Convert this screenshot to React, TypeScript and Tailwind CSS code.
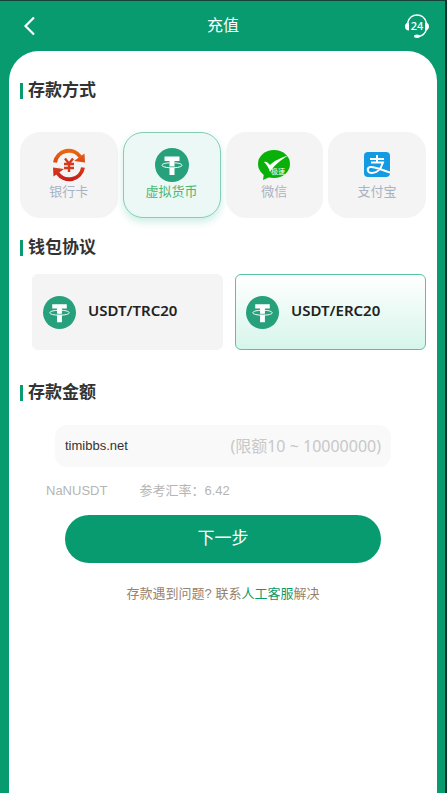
import { useState } from "react";

const TetherIcon = ({ className }: { className: string }) => (
  <svg viewBox="0 0 34 34" className={className} aria-hidden="true">
    <circle cx="17" cy="17" r="17" fill="#26a17b" />
    <path d="M9.500 8.500h15v4.500h-5v14h-5V13h-5z" fill="#fff" />
    <path d="M14.500 14.800C10 15 7 16 7 17.300c0 1.400 4.500 2.500 10 2.500s10-1.100 10-2.500c0-1.300-3-2.300-7.500-2.500" fill="none" stroke="#fff" strokeWidth="1" />
    <path d="M14.500 18.700c1.600.2 3.400.2 5 0" fill="none" stroke="#26a17b" strokeWidth="0.800" />
  </svg>
);

const BankIcon = () => (
  <svg viewBox="0 0 34 34" className="h-[34px] w-[34px]" aria-hidden="true">
    <defs>
      <linearGradient id="bank" gradientUnits="userSpaceOnUse" x1="0" y1="0" x2="0" y2="34">
        <stop offset="0" stopColor="#ee6c10" />
        <stop offset="1" stopColor="#c41a1c" />
      </linearGradient>
    </defs>
    <path d="M3 14.500A14 14 0 0 1 28.500 9M31 19.500A14 14 0 0 1 5.500 25" fill="none" stroke="url(#bank)" strokeWidth="4" />
    <path d="M32.500 5.500L33 14.500 22 13zM1.500 28.500L1 19.500 12 21z" fill="url(#bank)" />
    <path d="M13 10.500l4 5 4-5M17 15v9M12 16h10M12 20h10" fill="none" stroke="#d8391b" strokeWidth="2.400" />
  </svg>
);

const WechatIcon = () => (
  <svg viewBox="0 0 34 34" className="h-[34px] w-[34px]" aria-hidden="true">
    <ellipse cx="17" cy="16" rx="16" ry="14" fill="#09b007" />
    <path d="M7 25l-1 7 9-4z" fill="#09b007" />
    <path d="M7 14c3-1 4 1 6 3 4-4 10-7 19-10-8 5-14 9-19 17-1-4-3-7-6-10z" fill="#fff" />
    <text x="14" y="26" fontSize="7" fill="#fff" fontFamily="Noto Sans CJK SC, sans-serif">
      极速
    </text>
  </svg>
);

const AlipayIcon = () => (
  <svg viewBox="0 0 34 34" className="h-[34px] w-[34px]" aria-hidden="true">
    <rect x="4" y="4" width="26" height="25" rx="4" fill="#129be2" />
    <path
      d="M10 11h14M17 7v7M11 14.500h12c-2 6-6 10.500-11 10.500-5 0-5.500-5-2-6 5-1 11 3 20 5.500"
      fill="none"
      stroke="#fff"
      strokeWidth="2"
    />
  </svg>
);

const ServiceIcon = () => (
  <svg viewBox="0 0 24 24" className="h-6 w-6" aria-hidden="true">
    <path d="M2.500 9C4 3.500 8 1 12 1s8 2.500 9.500 8M21.500 15c-1 4-4 7-8.500 7.500" fill="none" stroke="#fff" strokeWidth="1.400" />
    <path d="M4 8.500v8C1.500 16.500 0 15 0 12.500s1.500-4 4-4zM20 8.500v8c2.500 0 4-1.500 4-4s-1.500-4-4-4z" fill="#fff" />
    <ellipse cx="12" cy="22.300" rx="3" ry="1.700" fill="#fff" />
    <text x="12" y="15.500" fontSize="11" fontWeight="600" textAnchor="middle" fill="#fff" fontFamily="Open Sans, sans-serif">
      24
    </text>
  </svg>
);

const methods = [
  { id: "bank", label: "银行卡", icon: <BankIcon /> },
  { id: "crypto", label: "虚拟货币", icon: <TetherIcon className="h-[34px] w-[34px]" /> },
  { id: "wechat", label: "微信", icon: <WechatIcon /> },
  { id: "alipay", label: "支付宝", icon: <AlipayIcon /> },
];

const protocols = ["USDT/TRC20", "USDT/ERC20"];

const SectionTitle = ({ children }: { children: string }) => (
  <h2 className="flex h-6 items-center gap-[5px] text-[17px] font-bold text-[#333]">
    <span className="h-4 w-[3px] bg-[#089b70]" />
    {children}
  </h2>
);

export default function App() {
  const [method, setMethod] = useState("crypto");
  const [protocol, setProtocol] = useState("USDT/ERC20");
  const [amount, setAmount] = useState("timibbs.net");

  return (
    <div className="flex min-h-screen flex-col border-t border-r-2 border-t-[#163f35] border-r-[#12362d] bg-[#089b70] pr-2 pl-[9px] font-['Liberation_Sans','Noto_Sans_CJK_SC',sans-serif]">
      <header className="flex h-[50px] items-center justify-between px-2 text-white">
        <button aria-label="返回" className="flex w-6 items-center justify-center">
          <svg viewBox="0 0 14 20" className="h-5 w-[14px]" aria-hidden="true">
            <path d="M12 1.500L3.500 10l8.500 8.500" fill="none" stroke="#fff" strokeWidth="2.200" />
          </svg>
        </button>
        <h1 className="text-base">充值</h1>
        <button aria-label="在线客服">
          <ServiceIcon />
        </button>
      </header>

      <main className="grow rounded-t-[30px] bg-white px-[11px] pt-7">
        <SectionTitle>存款方式</SectionTitle>
        <div className="mt-[29px] grid grid-cols-4 gap-[5px]">
          {methods.map((item) => (
            <button
              key={item.id}
              onClick={() => setMethod(item.id)}
              className={`flex h-[86px] flex-col items-center rounded-[20px] border pt-[15px] text-[13px] leading-5 ${
                method === item.id
                  ? "border-[#84cdb7] bg-[#ebf8f5] text-[#4cb670] shadow-[0_4px_8px_#cdeee4]"
                  : "border-[#f4f4f4] bg-[#f4f4f4] text-[#a9b3c2]"
              }`}
            >
              {item.icon}
              {item.label}
            </button>
          ))}
        </div>

        <div className="mt-[18px]">
          <SectionTitle>钱包协议</SectionTitle>
        </div>
        <div className="mt-[14px] grid grid-cols-2 gap-3 pl-3">
          {protocols.map((name) => (
            <button
              key={name}
              onClick={() => setProtocol(name)}
              className={`flex h-[76px] items-center gap-3 rounded-md border pl-[10px] font-['Noto_Sans',sans-serif] text-[15px] font-semibold text-[#222] ${
                protocol === name
                  ? "border-[#58c3a2] bg-linear-to-b from-white to-[#d6f5eb]"
                  : "border-[#f4f4f4] bg-[#f4f4f4]"
              }`}
            >
              <TetherIcon className="h-[33px] w-[33px]" />
              <span className="pb-1">{name}</span>
            </button>
          ))}
        </div>

        <div className="mt-[31px]">
          <SectionTitle>存款金额</SectionTitle>
        </div>
        <label className="mx-[35px] mt-5 flex h-[42px] items-center rounded-xl bg-[#f9f9f9] px-[10px]">
          <input
            value={amount}
            onChange={(e) => setAmount(e.target.value)}
            className="min-w-0 flex-1 text-[13px] text-[#333] outline-none"
          />
          <span className="font-['Noto_Sans','Noto_Sans_CJK_SC',sans-serif] text-base whitespace-nowrap text-[#c8c8c8]">
            (限额10 ~ 10000000)
          </span>
        </label>
        <div className="mt-[14px] flex gap-8 pl-[26px] text-[13px] leading-5 text-[#b5b5b5]">
          <span>NaNUSDT</span>
          <span>参考汇率：6.42</span>
        </div>
        <button className="mx-[45px] mt-[14px] flex h-12 w-[calc(100%-90px)] items-center justify-center rounded-full bg-[#089b70] text-[17px] text-white">
          下一步
        </button>
        <p className="mt-[21px] text-center text-[13px] leading-5 text-[#968370]">
          存款遇到问题? 联系
          <a href="#service" className="text-[#089b70]">
            人工客服
          </a>
          解决
        </p>
      </main>
    </div>
  );
}
